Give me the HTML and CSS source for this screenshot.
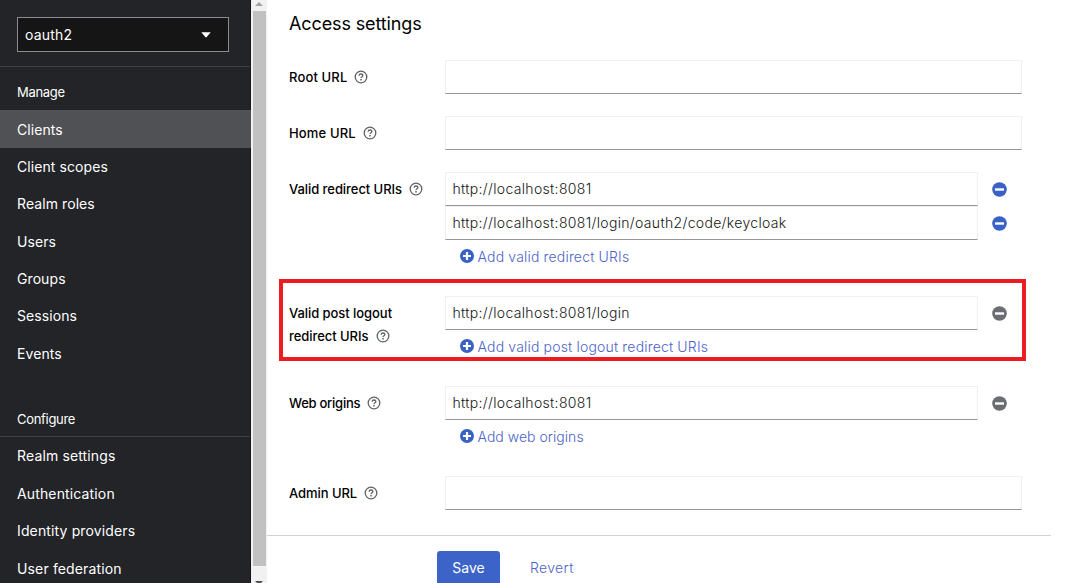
FILE: index.html
```html
<!DOCTYPE html>
<html lang="en">
<head>
<meta charset="utf-8">
<title>Client details</title>
<link rel="stylesheet" href="styles.css">
</head>
<body>
<svg class="sprite" aria-hidden="true">
  <symbol id="help" viewBox="0 0 14 14"><circle cx="7" cy="7" r="5.800" fill="none" stroke="#5f6266" stroke-width="1.300"/><path d="M5.100 5.700C5.200 4.500 6 4 7 4s1.900.6 1.900 1.600C8.900 6.800 7 6.800 7 8.100" fill="none" stroke="#5f6266" stroke-width="1.300"/><circle cx="7" cy="9.700" r=".85" fill="#5f6266"/></symbol>
  <symbol id="plus" viewBox="0 0 14 14"><circle cx="7" cy="7" r="7" fill="#3a62c6"/><path d="M7 3v8M3 7h8" stroke="#fff" stroke-width="2.200"/></symbol>
  <symbol id="minus" viewBox="0 0 15 15"><circle cx="7.500" cy="7.500" r="7.300" fill="currentColor"/><path d="M3 7.500h9" stroke="#fff" stroke-width="2.400"/></symbol>
</svg>
<div class="app">
  <aside class="sidebar">
    <div class="realm"><div class="select"><span>oauth2</span><svg width="10" height="6" viewBox="0 0 10 6"><path d="M.3.3h9.400L5.700 5.100a1 1 0 0 1-1.400 0z" fill="#fff"/></svg></div></div>
    <nav class="manage">
      <h2 class="group">Manage</h2>
      <a class="item active">Clients</a>
      <a class="item">Client scopes</a>
      <a class="item">Realm roles</a>
      <a class="item">Users</a>
      <a class="item">Groups</a>
      <a class="item">Sessions</a>
      <a class="item">Events</a>
    </nav>
    <nav class="configure">
      <h2 class="group">Configure</h2>
      <a class="item">Realm settings</a>
      <a class="item">Authentication</a>
      <a class="item">Identity providers</a>
      <a class="item">User federation</a>
    </nav>
  </aside>
  <div class="scrollbar">
    <svg width="8" height="4" viewBox="0 0 8 4"><path d="M4 0l4 4H0z" fill="#a3a3a3"/></svg>
    <div class="thumb"></div>
    <svg class="down" width="8" height="4" viewBox="0 0 8 4"><path d="M4 4l4-4H0z" fill="#505050"/></svg>
  </div>
  <main class="main">
    <h1 class="title">Access settings</h1>
    <form class="form">
      <div class="row"><div class="label url"><span>Root URL</span><svg class="help"><use href="#help"/></svg></div><div class="input"></div></div>
      <div class="row"><div class="label url"><span>Home URL</span><svg class="help"><use href="#help"/></svg></div><div class="input"></div></div>
      <div class="row"><div class="label"><span>Valid redirect URIs</span><svg class="help"><use href="#help"/></svg></div>
        <div class="values">
          <div class="entry"><div class="input">http://localhost:8081</div><svg class="minus"><use href="#minus"/></svg></div>
          <div class="entry"><div class="input">http://localhost:8081/login/oauth2/code/keycloak</div><svg class="minus"><use href="#minus"/></svg></div>
          <a class="add"><svg class="plus"><use href="#plus"/></svg><span>Add valid redirect URIs</span></a>
        </div></div>
      <div class="row marked"><div class="label two-line"><span>Valid post logout<br>redirect URIs</span><svg class="help"><use href="#help"/></svg></div>
        <div class="values">
          <div class="entry"><div class="input">http://localhost:8081/login</div><svg class="minus off"><use href="#minus"/></svg></div>
          <a class="add"><svg class="plus"><use href="#plus"/></svg><span>Add valid post logout redirect URIs</span></a>
        </div></div>
      <div class="row"><div class="label origins"><span>Web origins</span><svg class="help"><use href="#help"/></svg></div>
        <div class="values">
          <div class="entry"><div class="input">http://localhost:8081</div><svg class="minus off"><use href="#minus"/></svg></div>
          <a class="add origins-link"><svg class="plus"><use href="#plus"/></svg><span>Add web origins</span></a>
        </div></div>
      <div class="row"><div class="label"><span>Admin URL</span><svg class="help"><use href="#help"/></svg></div><div class="input"></div></div>
    </form>
    <footer class="actions"><a class="save">Save</a><a class="revert">Revert</a></footer>
  </main>
</div>
</body>
</html>
```
FILE: styles.css
```css
* { box-sizing: border-box; }
body { margin: 0; background: #fff; font-family: Inter, "Liberation Sans", sans-serif; overflow: hidden; }
h1, h2 { margin: 0; font-weight: 400; }
svg { display: block; flex: none; }
.sprite { display: none; }
.app { display: flex; height: 583px; overflow: hidden; }
.sidebar { width: 251px; flex: none; background: #222427; color: #fff; border-right: 1px solid #151617; }
.realm { height: 67px; padding: 17px 0 0 17px; border-bottom: 1px solid #3e4043; }
.select { width: 212px; height: 35px; padding: 0 17px 0 7px; display: flex; align-items: center; justify-content: space-between; background: #151515; border: 1px solid #8a8d90; font-size: 14px; letter-spacing: .2px; }
.group { font-size: 13px; line-height: 18px; padding-left: 17px; letter-spacing: -.3px; }
.manage .group { height: 43px; padding-top: 16px; }
.item { display: flex; align-items: center; height: 37.450px; padding-left: 17px; font-size: 14px; letter-spacing: .08px; white-space: nowrap; }
.item.active { height: 38px; margin: 0 -1px -.5px 0; background: #4f5154; }
.configure { margin-top: 38px; }
.configure .group { height: 27px; border-bottom: 1px solid #3e4043; }
.configure .item { letter-spacing: .14px; }
.scrollbar { width: 16px; flex: none; background: #f1f1f1; display: flex; flex-direction: column; align-items: center; padding-top: 2px; }
.thumb { width: 13px; height: 555px; flex: none; margin-top: 5px; background: #c1c1c1; }
.down { margin-top: 15px; }
.main { flex: 1; min-width: 0; }
.title { height: 60px; padding: 11px 0 0 22px; font-size: 18px; line-height: 26px; letter-spacing: -.12px; color: #000; }
.form { display: flex; flex-direction: column; gap: 22px; padding-left: 22px; height: 475px; }
.row { display: flex; position: relative; width: 733px; }
.label { width: 155.500px; flex: none; height: 34px; display: flex; align-items: center; gap: 7px; font-size: 13px; font-weight: 500; line-height: 22.500px; letter-spacing: -.06px; color: #000; white-space: nowrap; }
.url { letter-spacing: .15px; }
.origins { letter-spacing: -.25px; }
.two-line { height: 57px; align-items: flex-end; padding-bottom: 6px; }
.two-line span { width: 80px; }
.two-line .help { margin-bottom: 4px; }
.help { width: 14px; height: 14px; }
.input { flex: 1; height: 34px; padding: 0 7px; border: 1px solid #f0f0f0; border-bottom-color: #949698; font-size: 14px; line-height: 32px; font-weight: 300; color: #151515; white-space: nowrap; letter-spacing: .33px; }
.values { flex: 1; }
.entry { display: flex; align-items: center; padding-right: 15px; gap: 14px; }
.minus { width: 15px; height: 15px; color: #3a62c6; }
.off { color: #6a6e73; }
.add { display: flex; align-items: center; height: 34px; padding: 0 0 2px 15px; gap: 4px; font-size: 14px; font-weight: 300; letter-spacing: .17px; color: #4d63c8; white-space: nowrap; }
.origins-link { letter-spacing: .03px; }
.plus { width: 14px; height: 14px; }
.marked::after { content: ""; box-sizing: border-box; position: absolute; left: -10px; top: -17px; width: 747px; height: 82px; border: 4px solid #ed1c24; }
.actions { width: 784px; height: 60px; border-top: 1px solid #d2d2d2; padding: 15px 0 0 170px; display: flex; gap: 30px; font-size: 14px; line-height: 34px; }
.save { width: 63px; height: 36px; border-radius: 3px; background: #3c64c8; color: #fff; text-align: center; }
.revert { color: #4d63c8; font-weight: 300; letter-spacing: .35px; }
```
